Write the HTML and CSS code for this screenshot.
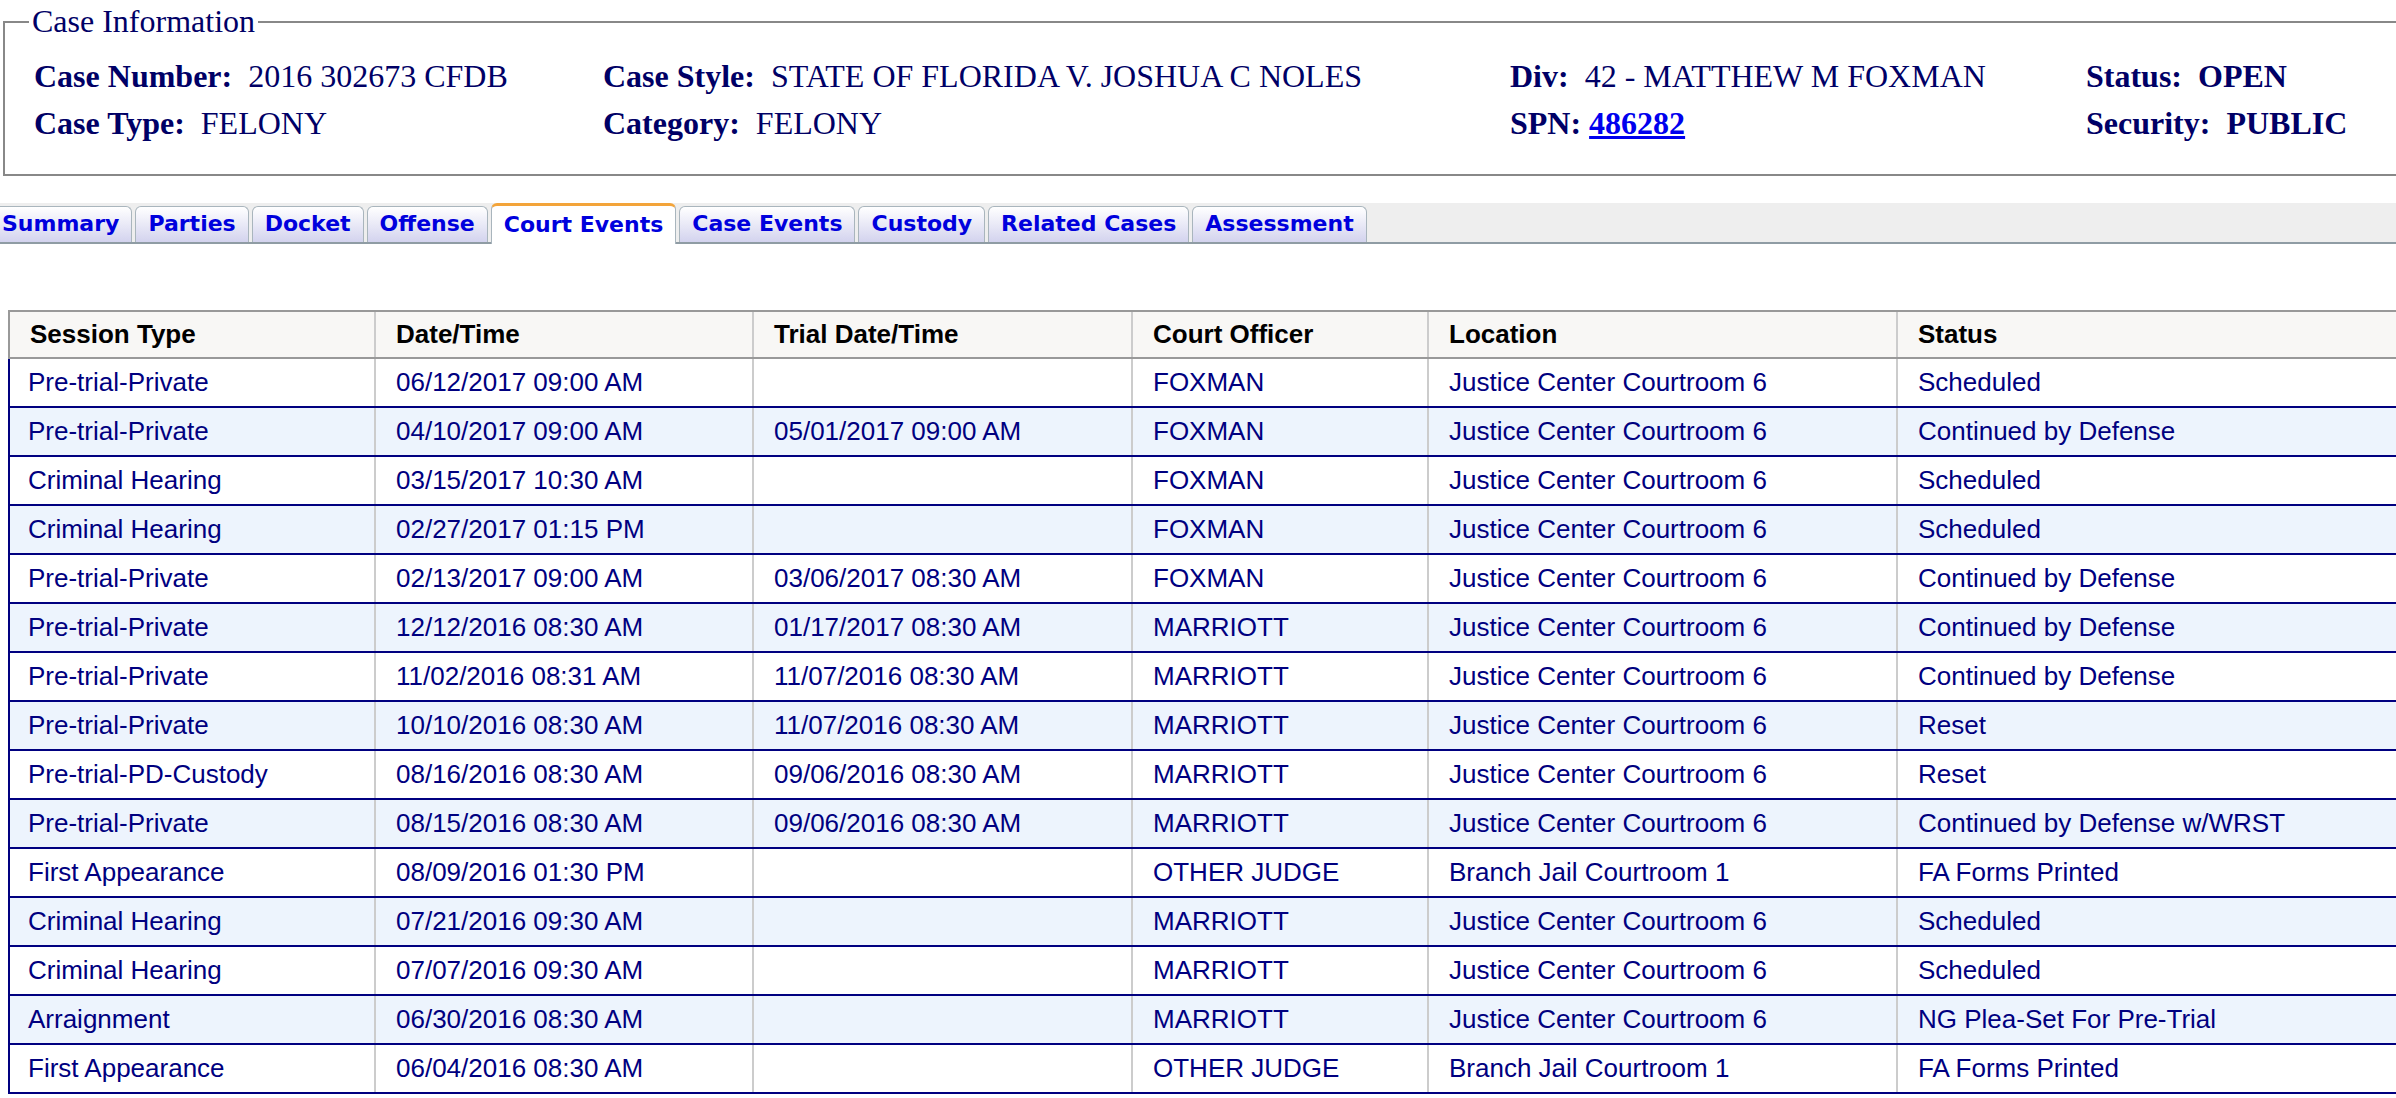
FILE: index.html
```html
<!DOCTYPE html>
<html lang="en">
<head>
    <meta charset="UTF-8">
    <title>Case Information - Court Events</title>
    <link rel="stylesheet" href="styles.css">
</head>
<body>
<div class="page">

    <fieldset class="case-info">
        <legend>Case Information</legend>
        <div class="info-grid">
            <div><span class="label">Case Number:</span>&nbsp; 2016 302673 CFDB</div>
            <div><span class="label">Case Style:</span>&nbsp; STATE OF FLORIDA V. JOSHUA C NOLES</div>
            <div><span class="label">Div:</span>&nbsp; 42 - MATTHEW M FOXMAN</div>
            <div><span class="label">Status:</span>&nbsp; <b>OPEN</b></div>
            <div><span class="label">Case Type:</span>&nbsp; FELONY</div>
            <div><span class="label">Category:</span>&nbsp; FELONY</div>
            <div><span class="label">SPN:</span>&nbsp;<a href="#" class="spn-link">486282</a></div>
            <div><span class="label">Security:</span>&nbsp; <b>PUBLIC</b></div>
        </div>
    </fieldset>

    <ul class="tabs">
        <li><a href="#">Summary</a></li>
        <li><a href="#">Parties</a></li>
        <li><a href="#">Docket</a></li>
        <li><a href="#">Offense</a></li>
        <li class="active"><a href="#">Court Events</a></li>
        <li><a href="#">Case Events</a></li>
        <li><a href="#">Custody</a></li>
        <li><a href="#">Related Cases</a></li>
        <li><a href="#">Assessment</a></li>
    </ul>

    <table class="events">
        <colgroup>
            <col class="col-type">
            <col class="col-date">
            <col class="col-trial">
            <col class="col-officer">
            <col class="col-location">
            <col class="col-status">
        </colgroup>
        <thead>
            <tr>
                <th>Session Type</th>
                <th>Date/Time</th>
                <th>Trial Date/Time</th>
                <th>Court Officer</th>
                <th>Location</th>
                <th>Status</th>
            </tr>
        </thead>
        <tbody>
            <tr><td>Pre-trial-Private</td><td>06/12/2017 09:00 AM</td><td></td><td>FOXMAN</td><td>Justice Center Courtroom 6</td><td>Scheduled</td></tr>
            <tr><td>Pre-trial-Private</td><td>04/10/2017 09:00 AM</td><td>05/01/2017 09:00 AM</td><td>FOXMAN</td><td>Justice Center Courtroom 6</td><td>Continued by Defense</td></tr>
            <tr><td>Criminal Hearing</td><td>03/15/2017 10:30 AM</td><td></td><td>FOXMAN</td><td>Justice Center Courtroom 6</td><td>Scheduled</td></tr>
            <tr><td>Criminal Hearing</td><td>02/27/2017 01:15 PM</td><td></td><td>FOXMAN</td><td>Justice Center Courtroom 6</td><td>Scheduled</td></tr>
            <tr><td>Pre-trial-Private</td><td>02/13/2017 09:00 AM</td><td>03/06/2017 08:30 AM</td><td>FOXMAN</td><td>Justice Center Courtroom 6</td><td>Continued by Defense</td></tr>
            <tr><td>Pre-trial-Private</td><td>12/12/2016 08:30 AM</td><td>01/17/2017 08:30 AM</td><td>MARRIOTT</td><td>Justice Center Courtroom 6</td><td>Continued by Defense</td></tr>
            <tr><td>Pre-trial-Private</td><td>11/02/2016 08:31 AM</td><td>11/07/2016 08:30 AM</td><td>MARRIOTT</td><td>Justice Center Courtroom 6</td><td>Continued by Defense</td></tr>
            <tr><td>Pre-trial-Private</td><td>10/10/2016 08:30 AM</td><td>11/07/2016 08:30 AM</td><td>MARRIOTT</td><td>Justice Center Courtroom 6</td><td>Reset</td></tr>
            <tr><td>Pre-trial-PD-Custody</td><td>08/16/2016 08:30 AM</td><td>09/06/2016 08:30 AM</td><td>MARRIOTT</td><td>Justice Center Courtroom 6</td><td>Reset</td></tr>
            <tr><td>Pre-trial-Private</td><td>08/15/2016 08:30 AM</td><td>09/06/2016 08:30 AM</td><td>MARRIOTT</td><td>Justice Center Courtroom 6</td><td>Continued by Defense w/WRST</td></tr>
            <tr><td>First Appearance</td><td>08/09/2016 01:30 PM</td><td></td><td>OTHER JUDGE</td><td>Branch Jail Courtroom 1</td><td>FA Forms Printed</td></tr>
            <tr><td>Criminal Hearing</td><td>07/21/2016 09:30 AM</td><td></td><td>MARRIOTT</td><td>Justice Center Courtroom 6</td><td>Scheduled</td></tr>
            <tr><td>Criminal Hearing</td><td>07/07/2016 09:30 AM</td><td></td><td>MARRIOTT</td><td>Justice Center Courtroom 6</td><td>Scheduled</td></tr>
            <tr><td>Arraignment</td><td>06/30/2016 08:30 AM</td><td></td><td>MARRIOTT</td><td>Justice Center Courtroom 6</td><td>NG Plea-Set For Pre-Trial</td></tr>
            <tr><td>First Appearance</td><td>06/04/2016 08:30 AM</td><td></td><td>OTHER JUDGE</td><td>Branch Jail Courtroom 1</td><td>FA Forms Printed</td></tr>
        </tbody>
    </table>

</div>
</body>
</html>
```

FILE: styles.css
```css
html {
    overflow: hidden; /* page is wider than the window */
}

body {
    margin: 0;
    background-color: #fff;
    font-family: 'Liberation Serif', 'Times New Roman', serif;
    color: #000066;
}

.page {
    width: 2480px;
}

/* Case information box */
.case-info {
    margin: 3px 0 0 3px;
    padding: 13px 0 27px 29px;
    border: 2px solid #888;
    font-size: 32px;
}

.case-info legend {
    margin-left: -5px;
    padding: 0 3px;
    color: #000066;
}

.info-grid {
    display: grid;
    grid-template-columns: 569px 907px 576px auto;
    line-height: 47px;
}

.label {
    font-weight: bold;
}

.spn-link {
    color: #0000ee;
    font-weight: bold;
    text-decoration: underline;
}

/* Tab strip */
.tabs {
    display: flex;
    gap: 3px;
    list-style: none;
    margin: 27px 0 0 -11px;
    padding: 3px 0 0;
    background-color: #eeeeee;
    border-bottom: 2px solid #8f9ca4;
    height: 36px;
}

.tabs li {
    height: 35px;
    border: 1px solid #a9b5bd;
    border-bottom: none;
    border-radius: 6px 6px 0 0;
    background: linear-gradient(#ffffff, #d3d3ee);
}

.tabs a {
    display: block;
    padding: 0 12px;
    line-height: 34px;
    font-family: 'DejaVu Sans', Verdana, sans-serif;
    font-weight: bold;
    font-size: 22px;
    color: #0000dd;
    text-decoration: none;
}

.tabs li.active {
    height: 38px;
    margin-top: -3px;
    border-top: 3px solid #f3a43a;
    background: #fff;
}

.tabs li.active a {
    line-height: 38px;
}

/* Court events table */
.events {
    margin: 66px 0 0 8px;
    border-collapse: collapse;
    table-layout: fixed;
    width: 2460px;
    font-family: 'Liberation Sans', Arial, sans-serif;
    font-size: 26px;
}

.col-type { width: 366px; }
.col-date { width: 378px; }
.col-trial { width: 379px; }
.col-officer { width: 296px; }
.col-location { width: 469px; }

.events th {
    height: 45px;
    padding: 0 0 0 20px;
    text-align: left;
    color: #000;
    background-color: #f8f7f5;
    border-top: 2px solid #999;
    border-bottom: 2px solid #999;
    border-left: 2px solid #ccc;
}

.events th:first-child {
    border-left-color: #999;
}

.events td {
    height: 47px;
    padding: 0 0 0 20px;
    color: #000080;
    border-bottom: 2px solid #000080;
    border-left: 2px solid #ccc;
}

.events td:first-child {
    border-left-color: #000080;
    padding-left: 18px;
}

.events tbody tr:nth-child(even) td {
    background-color: #edf4fd;
}
```
